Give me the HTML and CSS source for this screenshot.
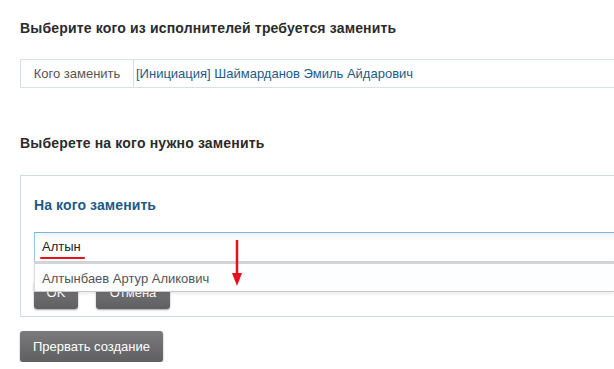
FILE: index.html
```html
<!DOCTYPE html>
<html lang="ru">
<head>
<meta charset="utf-8">
<link rel="stylesheet" href="styles.css">
</head>
<body>
<div class="page">
  <h2 class="title">Выберите кого из исполнителей требуется заменить</h2>
  <table class="info">
    <tr>
      <td class="label">Кого заменить</td>
      <td class="value">[Инициация] Шаймарданов Эмиль Айдарович</td>
    </tr>
  </table>
  <h2 class="title second">Выберете на кого нужно заменить</h2>
  <div class="panel">
    <h3 class="panel-title">На кого заменить</h3>
    <div class="field">
      <div class="input">Алтын</div>
      <span class="underline"></span>
      <div class="suggest">Алтынбаев Артур Аликович</div>
      <svg class="arrow" width="12" height="48" viewBox="0 0 12 48">
        <line x1="6" y1="0" x2="6" y2="36" stroke="#e8101a" stroke-width="2.5"/>
        <polygon points="1,33 11,33 6,46" fill="#e8101a"/>
      </svg>
    </div>
    <div class="buttons">
      <button class="btn small ok">OK</button>
      <button class="btn small cancel">Отмена</button>
    </div>
  </div>
  <button class="btn abort">Прервать создание</button>
</div>
</body>
</html>
```
FILE: styles.css
```css
html, body {
  margin: 0;
  padding: 0;
  background: #fff;
  overflow: hidden;
}
.page {
  padding: 20px 0 0 20px;
  font-family: "Liberation Sans", Arial, sans-serif;
  font-size: 13px;
  color: #333;
}
.title {
  margin: 0;
  font-size: 14px;
  font-weight: bold;
  color: #2b2b2b;
  line-height: 17px;
  letter-spacing: 0.17px;
}
.info {
  margin-top: 22px;
  border-collapse: collapse;
  width: 100%;
}
.info td {
  border: 1px solid #d5e1ea;
  height: 27px;
  padding: 0 4px;
  font-size: 13px;
}
.info .value {
  border-right: none;
}
.info .label {
  width: 104px;
  color: #555;
  text-align: center;
}
.info .value {
  color: #1d5a88;
  padding-left: 2px;
}
.second {
  margin-top: 47px;
}
.panel {
  margin-top: 23px;
  border: 1px solid #cddde8;
  border-right: none;
  padding: 21px 0 5px 13px;
  box-sizing: border-box;
  height: 142px;
}
.panel-title {
  margin: 0;
  font-size: 14px;
  font-weight: bold;
  color: #1d5a88;
  line-height: 17px;
  letter-spacing: 0.1px;
}
.field {
  position: relative;
  margin-top: 18px;
}
.input {
  height: 30px;
  box-sizing: border-box;
  border: 1px solid #c9d7e0;
  border-right: none;
  border-top-color: #7ab4d8;
  border-left-color: #9cc4de;
  background: linear-gradient(#eef4f8, #fff 8px);
  padding: 6px 7px;
  font-size: 13px;
  color: #222;
  line-height: 16px;
}
.underline {
  position: absolute;
  left: 6px;
  top: 25px;
  width: 45px;
  height: 2px;
  background: #e8101a;
  border-radius: 1px;
}
.suggest {
  position: absolute;
  left: 0;
  right: 0;
  top: 30px;
  height: 30px;
  box-sizing: border-box;
  border-top: 2px solid #d4d4d4;
  border-left: 1px solid #dcdcdc;
  border-bottom: 1px solid #c8c8c8;
  background: #fdfeff;
  box-shadow: 0 2px 3px rgba(0,0,0,0.08);
  padding: 7px 7px 5px;
  color: #555;
  font-size: 13px;
  line-height: 16px;
  z-index: 2;
}
.arrow {
  position: absolute;
  left: 197px;
  top: 8px;
  z-index: 3;
}
.buttons {
  display: flex;
  gap: 18px;
  margin-top: 19px;
}
.btn {
  font-family: "Liberation Sans", Arial, sans-serif;
  font-size: 13px;
  color: #fff;
  border: none;
  border-radius: 3px;
  background: linear-gradient(#7b7b7e, #5f5f62);
  box-shadow: 0 1px 2px rgba(0,0,0,0.35);
  cursor: pointer;
}
.small {
  height: 28px;
  padding: 0 0 6px;
}
.ok {
  width: 44px;
}
.cancel {
  width: 74px;
}
.abort {
  margin-top: 14px;
  height: 31px;
  width: 143px;
  padding: 0;
  font-size: 13px;
}
```
